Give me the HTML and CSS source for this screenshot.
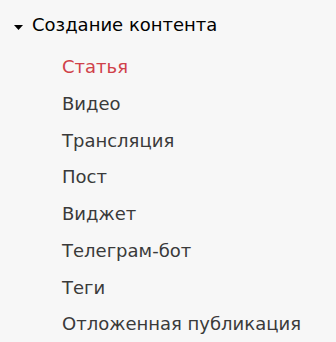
FILE: index.html
```html
<!DOCTYPE html>
<html lang="ru">
<head>
<meta charset="utf-8">
<link rel="stylesheet" href="styles.css">
</head>
<body>
<nav class="menu">
  <div class="group-title">
    <svg class="caret" width="9" height="5" viewBox="0 0 9 5"><path d="M0 0H9L4.5 5Z" fill="#000"/></svg>
    <span>Создание контента</span>
  </div>
  <ul class="items">
    <li class="item active">Статья</li>
    <li class="item">Видео</li>
    <li class="item">Трансляция</li>
    <li class="item">Пост</li>
    <li class="item">Виджет</li>
    <li class="item">Телеграм-бот</li>
    <li class="item">Теги</li>
    <li class="item">Отложенная публикация</li>
  </ul>
</nav>
</body>
</html>
```
FILE: styles.css
```css
html, body {
  margin: 0;
  padding: 0;
  background: #f7f7f7;
}
body {
  font-family: "DejaVu Sans", "Noto Sans", sans-serif;
  width: 336px;
  height: 342px;
  overflow: hidden;
}
.menu {
  padding-top: 10px;
}
.group-title {
  display: flex;
  align-items: center;
  gap: 9px;
  padding-left: 14px;
  height: 30px;
  line-height: 30px;
  font-size: 18px;
  color: #000;
}
.caret {
  display: block;
  margin-top: 4px;
}
.items {
  list-style: none;
  margin: 0;
  padding: 9px 0 0 62px;
}
.item {
  font-size: 18px;
  line-height: 36.75px;
  color: #3a3a3a;
}
.item.active {
  color: #d0414a;
}
```
